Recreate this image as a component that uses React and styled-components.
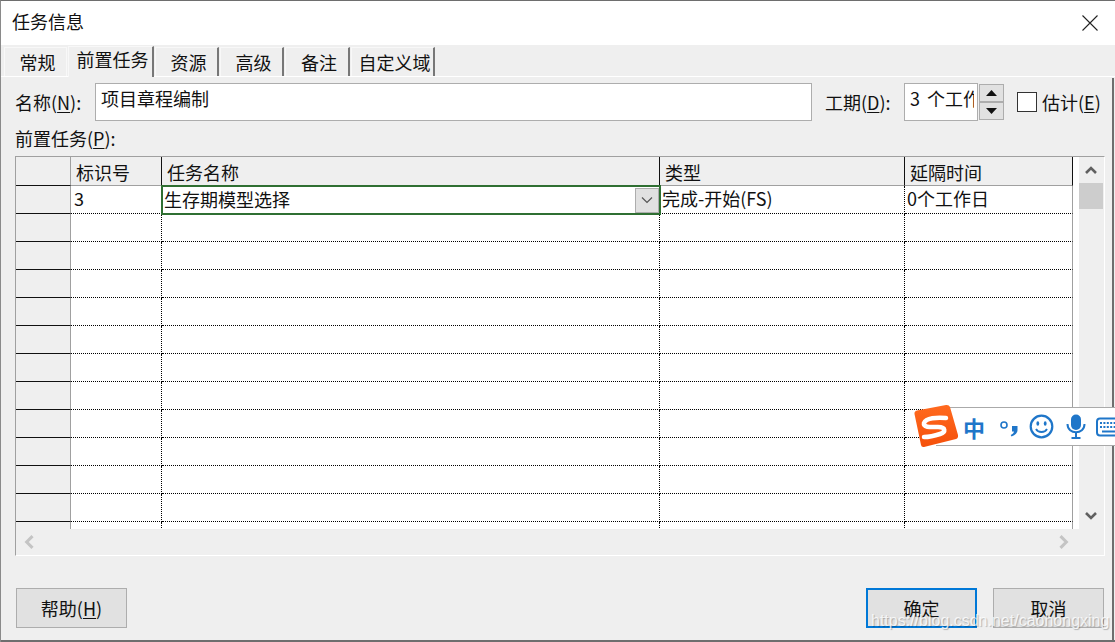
import React from "react";
import styled, { createGlobalStyle } from "styled-components";

const GlobalStyle = createGlobalStyle`
  html, body {
    margin: 0;
    padding: 0;
    background: #efefef;
  }
  * {
    box-sizing: border-box;
  }
`;

const Dialog = styled.div`
  position: relative;
  width: 1115px;
  height: 642px;
  overflow: hidden;
  display: flex;
  flex-direction: column;
  background: #efefef;
  border-top: 1px solid #6e6e6e;
  border-left: 1px solid #8a8a8a;
  font-family: "Noto Sans CJK SC", "Liberation Sans", sans-serif;
  font-size: 18px;
  color: #111;
`;

const BottomEdge = styled.div`
  position: absolute;
  left: 0;
  right: 0;
  bottom: 0;
  height: 2px;
  background: #6e6e6e;
`;

const RightEdge = styled.div`
  position: absolute;
  top: 77px;
  bottom: 0;
  right: 1px;
  width: 2px;
  background: #6e6e6e;
`;

const TitleBar = styled.div`
  height: 44px;
  flex: none;
  background: #fff;
  display: flex;
  align-items: center;
  justify-content: space-between;
  padding: 0 17px 4px 11px;
  line-height: 40px;
`;

const CloseIcon = styled.svg`
  margin-top: 3px;
`;

const TabStrip = styled.div`
  height: 32px;
  flex: none;
  display: flex;
  align-items: flex-end;
  padding-left: 3px;
  border-bottom: 1px solid #fff;
`;

const Tab = styled.div`
  width: ${(p) => p.$w}px;
  height: ${(p) => (p.$active ? 31 : 29)}px;
  margin-right: 1px;
  margin-bottom: ${(p) => (p.$active ? -1 : 0)}px;
  text-align: center;
  line-height: ${(p) => (p.$active ? 25 : 28)}px;
  padding-left: 4px;
  white-space: nowrap;
  background: #efefef;
  border-top: 1px solid #f8f8f8;
  border-left: 1px solid #f8f8f8;
  border-right: ${(p) => (p.$plain ? "1px solid #f8f8f8" : "2px solid #777")};
`;

const Body = styled.div`
  flex: 1;
  display: flex;
  flex-direction: column;
  padding: 6px 11px 12px 14px;
`;

const FormRow = styled.div`
  display: flex;
  align-items: center;
  height: 38px;
  flex: none;
`;

const Label = styled.label`
  line-height: 24px;
  white-space: nowrap;
  width: ${(p) => p.$w}px;
  padding-left: ${(p) => p.$indent || 0}px;
  flex: none;
`;

const Hotkey = styled.span`
  text-decoration: underline;
  text-underline-offset: 2px;
  text-decoration-thickness: 1px;
`;

const TextBox = styled.div`
  width: ${(p) => p.$w}px;
  height: 38px;
  flex: none;
  background: #fff;
  border: 1px solid #adadad;
  padding: 2px 5px;
  line-height: 24px;
  white-space: nowrap;
`;

const TextClip = styled.div`
  width: ${(p) => p.$w}px;
  overflow: hidden;
  word-spacing: 3px;
`;

const Spinner = styled.div`
  width: 25px;
  height: 36px;
  margin-left: 1px;
  flex: none;
  display: flex;
  flex-direction: column;
  justify-content: space-between;
`;

const SpinButton = styled.div`
  height: 18px;
  background: #e1e1e1;
  border: 1px solid #adadad;
  display: flex;
  align-items: center;
  justify-content: center;
`;

const Checkbox = styled.div`
  width: 20px;
  height: 20px;
  flex: none;
  margin: 0 5px 0 13px;
  background: #fff;
  border: 1px solid #333;
`;

const SectionLabel = styled.div`
  height: 35px;
  flex: none;
  padding-top: 5px;
  line-height: 24px;
`;

const TableFrame = styled.div`
  width: 1090px;
  height: 400px;
  flex: none;
  display: grid;
  grid-template-columns: 1057px 31px;
  grid-template-rows: 372px 26px;
  background: #efefef;
  border-top: 1px solid #a0a0a0;
  border-left: 1px solid #a0a0a0;
  border-bottom: 1px solid #fff;
  border-right: 1px solid #fff;
`;

const Grid = styled.div`
  background: #fff;
  overflow: hidden;
  display: grid;
  grid-template-columns: 55px 91px 498px 245px 168px;
  grid-template-rows: 29px;
  grid-auto-rows: 28px;
`;

const Corner = styled.div`
  background: #efefef;
  border-bottom: 1px solid #111;
  border-right: 1px solid #a0a0a0;
`;

const HeaderCell = styled.div`
  background: #efefef;
  border-bottom: 1px solid #a0a0a0;
  border-right: 1px solid #111;
  padding: 3px 0 0 5px;
  line-height: 25px;
  white-space: nowrap;
`;

const RowHead = styled.div`
  background: #efefef;
  border-bottom: 1px solid #111;
  border-right: 1px solid #a0a0a0;
`;

const Cell = styled.div`
  background: #fff;
  border-bottom: 1px dotted #000;
  border-right: ${(p) => (p.$last ? "1px solid #a0a0a0" : "1px dotted #000")};
  padding-left: ${(p) => p.$inset || 2}px;
  line-height: 25px;
  white-space: nowrap;
  overflow: hidden;
`;

const ActiveCell = styled.div`
  position: relative;
  margin: -1px -1px -1px -1px;
  height: 30px;
  z-index: 1;
  border: 2px solid #2f6f32;
  background: #fff;
  display: flex;
  align-items: center;
  justify-content: space-between;
  padding: 0 0 0 1px;
  line-height: 24px;
`;

const CellText = styled.span`
  margin-top: -2px;
`;

const ComboButton = styled.div`
  width: 24px;
  height: 25px;
  background: #e1e1e1;
  border: 1px solid #adadad;
  display: flex;
  align-items: center;
  justify-content: center;
`;

const VScroll = styled.div`
  display: flex;
  flex-direction: column;
  align-items: center;
  justify-content: space-between;
  border-left: 6px solid #fff;
  padding: 0 1px 7px 0;
`;

const ArrowSlot = styled.div`
  height: 26px;
  display: flex;
  align-items: center;
  justify-content: center;
`;

const Thumb = styled.div`
  width: 24px;
  height: 26px;
  background: #cdcdcd;
`;

const VTrack = styled.div`
  width: 100%;
  display: flex;
  flex-direction: column;
  align-items: center;
`;

const HScroll = styled.div`
  display: flex;
  align-items: center;
  justify-content: space-between;
  padding: 0 2px 0 6px;
`;

const Footer = styled.div`
  margin-top: 32px;
  display: flex;
  align-items: center;
  padding-left: 1px;
`;

const Button = styled.div`
  width: 111px;
  height: 40px;
  background: #e1e1e1;
  border: ${(p) => (p.$primary ? "2px solid #0078d7" : "1px solid #adadad")};
  display: flex;
  align-items: center;
  justify-content: center;
  padding-bottom: 1px;
  white-space: pre;
  margin-left: ${(p) => p.$gap || 0}px;
`;

const ImeBar = styled.div`
  position: absolute;
  top: 406px;
  left: 935px;
  right: 0;
  height: 39px;
  overflow: hidden;
  background: #fff;
  border-top: 1px solid #aaa;
  border-bottom: 1px solid #aaa;
  display: flex;
  align-items: center;
  padding-left: 27px;
`;

const ImeChar = styled.span`
  flex: none;
  color: #1f76c9;
  font-size: 22px;
  font-weight: 700;
  line-height: 30px;
  width: 37px;
`;

const ImeLogo = styled.svg`
  position: absolute;
  left: 912px;
  top: 403px;
`;

const ImeIcon = styled.svg`
  flex: none;
  margin-right: ${(p) => p.$gap || 0}px;
`;

const Watermark = styled.div`
  position: absolute;
  left: 870px;
  top: 610px;
  font-family: "Liberation Sans", sans-serif;
  font-size: 16px;
  line-height: 20px;
  color: rgba(255, 255, 255, 0.8);
  text-shadow: 1px 1px 1px rgba(0, 0, 0, 0.25);
  white-space: nowrap;
`;

const Arrow = ({ dir, color, size = 12 }) => {
  const paths = {
    up: "M1 9 L6 4 L11 9",
    down: "M1 3 L6 8 L11 3",
    left: "M9 1 L4 6 L9 11",
    right: "M3 1 L8 6 L3 11",
  };
  return (
    <svg width={size} height={size} viewBox="0 0 12 12">
      <path d={paths[dir]} fill="none" stroke={color} strokeWidth="2.6" />
    </svg>
  );
};

const Triangle = ({ up }) => (
  <svg width="11" height="6" viewBox="0 0 11 6">
    <path d={up ? "M5.5 0 L11 6 L0 6 Z" : "M0 0 L11 0 L5.5 6 Z"} fill="#111" />
  </svg>
);

const columns = ["标识号", "任务名称", "类型", "延隔时间"];
const emptyRows = Array.from({ length: 12 }, (_, i) => i);

export default function App() {
  return (
    <Dialog>
      <GlobalStyle />
      <TitleBar>
        <span>任务信息</span>
        <CloseIcon width="16" height="16" viewBox="0 0 16 16">
          <path d="M0.5 0.5 L15.5 15.5 M15.5 0.5 L0.5 15.5" stroke="#222" strokeWidth="1.1" fill="none" />
        </CloseIcon>
      </TitleBar>
      <TabStrip>
        <Tab $w={63} $plain>常规</Tab>
        <Tab $w={86} $active>前置任务</Tab>
        <Tab $w={64}>资源</Tab>
        <Tab $w={64}>高级</Tab>
        <Tab $w={65}>备注</Tab>
        <Tab $w={84}>自定义域</Tab>
      </TabStrip>
      <Body>
        <FormRow>
          <Label $w={80}>名称(<Hotkey>N</Hotkey>):</Label>
          <TextBox $w={717}>项目章程编制</TextBox>
          <Label $w={92} $indent={13}>工期(<Hotkey>D</Hotkey>):</Label>
          <TextBox $w={74}>
            <TextClip $w={64}>3 个工作日</TextClip>
          </TextBox>
          <Spinner>
            <SpinButton><Triangle up /></SpinButton>
            <SpinButton><Triangle /></SpinButton>
          </Spinner>
          <Checkbox />
          <Label $w={60}>估计(<Hotkey>E</Hotkey>)</Label>
        </FormRow>
        <SectionLabel>前置任务(<Hotkey>P</Hotkey>):</SectionLabel>
        <TableFrame>
          <Grid>
            <Corner />
            {columns.map((c) => (
              <HeaderCell key={c}>{c}</HeaderCell>
            ))}
            <RowHead />
            <Cell $inset={3}>3</Cell>
            <ActiveCell>
              <CellText>生存期模型选择</CellText>
              <ComboButton>
                <svg width="12" height="8" viewBox="0 0 12 8">
                  <path d="M1 1.5 L6 6.5 L11 1.5" fill="none" stroke="#555" strokeWidth="1.2" />
                </svg>
              </ComboButton>
            </ActiveCell>
            <Cell>完成-开始(FS)</Cell>
            <Cell $last>0个工作日</Cell>
            {emptyRows.map((r) => (
              <React.Fragment key={r}>
                <RowHead />
                <Cell />
                <Cell />
                <Cell />
                <Cell $last />
              </React.Fragment>
            ))}
          </Grid>
          <VScroll>
            <VTrack>
              <ArrowSlot><Arrow dir="up" color="#606060" /></ArrowSlot>
              <Thumb />
            </VTrack>
            <Arrow dir="down" color="#606060" />
          </VScroll>
          <HScroll>
            <Arrow dir="left" color="#c4c4c4" size={14} />
            <Arrow dir="right" color="#c4c4c4" size={14} />
          </HScroll>
        </TableFrame>
        <Footer>
          <Button>帮助(<Hotkey>H</Hotkey>)</Button>
          <Button $primary $gap={739}>确定</Button>
          <Button $gap={16}>取消</Button>
        </Footer>
      </Body>
      <RightEdge />
      <BottomEdge />
      <ImeBar>
        <ImeChar>中</ImeChar>
        <ImeIcon width="20" height="24" viewBox="0 0 20 24" $gap={9}>
          <circle cx="4" cy="10" r="3" fill="none" stroke="#1f76c9" strokeWidth="1.6" />
          <path d="M12 11 h5.5 v4 c0 3 -2 5 -6 6.5 l-0.8 -1.6 c2 -0.7 3 -1.6 3.2 -3.4 h-1.9 Z" fill="#1f76c9" />
        </ImeIcon>
        <ImeIcon width="25" height="25" viewBox="0 0 25 25" $gap={12}>
          <circle cx="12.5" cy="12.5" r="10.8" fill="none" stroke="#1f76c9" strokeWidth="2.2" />
          <ellipse cx="8.8" cy="9.5" rx="1.4" ry="2.2" fill="#1f76c9" />
          <ellipse cx="16.2" cy="9.5" rx="1.4" ry="2.2" fill="#1f76c9" />
          <path d="M7 15 C9 19 16 19 18 15" fill="none" stroke="#1f76c9" strokeWidth="1.8" />
        </ImeIcon>
        <ImeIcon width="20" height="25" viewBox="0 0 20 25" $gap={10}>
          <rect x="5" y="0.5" width="10" height="15.5" rx="5" fill="#1f76c9" />
          <path d="M1.5 10 C1.5 21 18.5 21 18.5 10" fill="none" stroke="#1f76c9" strokeWidth="2" />
          <path d="M10 18 V23 M5.5 24 H14.5" stroke="#1f76c9" strokeWidth="2" fill="none" />
        </ImeIcon>
        <ImeIcon width="24" height="20" viewBox="0 0 24 20">
          <rect x="1" y="1.5" width="22" height="17" rx="3" fill="none" stroke="#1f76c9" strokeWidth="2" />
          <path d="M4 6 H21 M4 10 H21" stroke="#1f76c9" strokeWidth="2" strokeDasharray="2 1.4" fill="none" />
          <path d="M6 14.5 H19" stroke="#1f76c9" strokeWidth="2" fill="none" />
        </ImeIcon>
      </ImeBar>
      <ImeLogo width="46" height="44" viewBox="0 0 46 44">
        <defs>
          <linearGradient id="imeOrange" x1="0" y1="0" x2="0" y2="1">
            <stop offset="0" stopColor="#ff6a1f" />
            <stop offset="1" stopColor="#f5500a" />
          </linearGradient>
        </defs>
        <path d="M4 6.5 L33 1 Q36 0.6 37 3 L45 31 Q45.5 34 43 35 L11 43 Q8.5 43.5 8 41 L1.5 10 Q1 7.5 4 6.5 Z" fill="url(#imeOrange)" />
        <path d="M33 14 C24 13 13 14 11 19 C10 24 19 23 25 23 C33 23 33 28 27 30 C21 32 15 33 11 33"
          fill="none" stroke="#fff" strokeWidth="4.5" strokeLinecap="round" />
      </ImeLogo>
      <Watermark>https://blog.csdn.net/caohongxing</Watermark>
    </Dialog>
  );
}
